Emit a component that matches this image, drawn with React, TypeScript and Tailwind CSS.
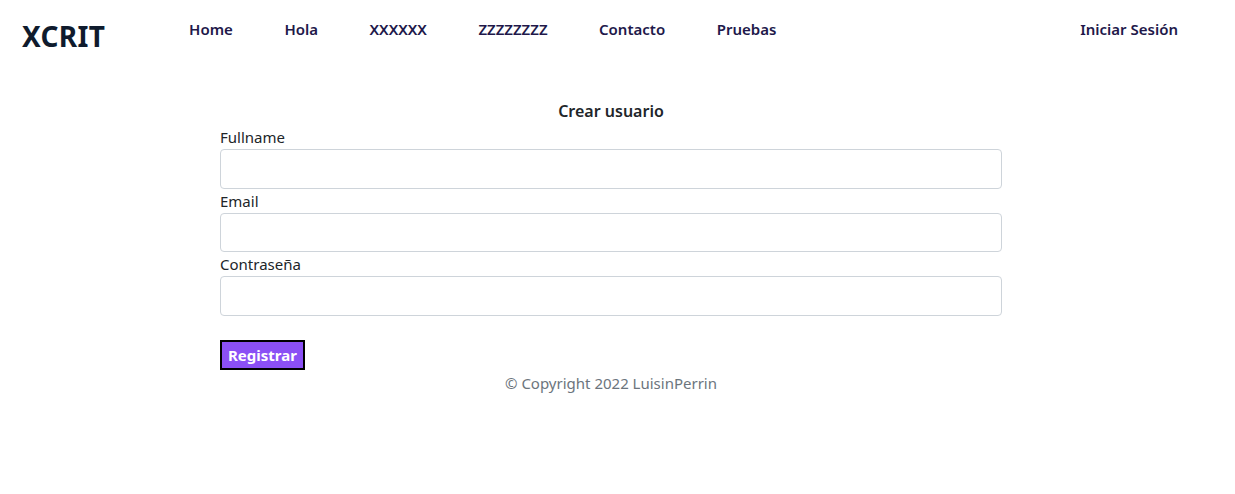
export default function App() {
  const links = ["Home", "Hola", "XXXXXX", "ZZZZZZZZ", "Contacto", "Pruebas"];
  return (
    <div className="min-h-[494px] bg-white text-[#212529]" style={{ fontFamily: '"Noto Sans", "Open Sans", sans-serif' }}>
      <nav className="flex h-[60px] items-center pl-[22px] pr-[57px]">
        <div className="text-[28px] font-bold leading-none tracking-[0.3px] text-[#0f1b2d] mt-[11px]">XCRIT</div>
        <ul className="ml-[84px] -mt-[2px] flex gap-[51.5px] text-[15px] font-semibold text-[#21184a]">
          {links.map((l) => (
            <li key={l}>{l}</li>
          ))}
        </ul>
        <div className="ml-auto -mt-[2px] text-[15px] font-semibold text-[#21184a]">Iniciar Sesión</div>
      </nav>
      <div className="ml-[220px] w-[782px] pt-[39px]">
        <h2 className="text-center text-[16px] font-semibold leading-[24px]">Crear usuario</h2>
        <div className="mt-[2px]">
          {["Fullname", "Email", "Contraseña"].map((f) => (
            <div key={f}>
              <label className="block text-[15px] leading-[24px]">{f}</label>
              <input className="block h-[39.5px] w-full rounded-[4px] border border-[#ced4da] bg-white px-3" />
            </div>
          ))}
        </div>
        <button className="mt-[24px] block border-2 border-black bg-[#8b50f5] px-[6px] text-[15px] font-bold leading-[26px] text-white">
          Registrar
        </button>
        <p className="mt-[1px] text-center text-[15px] leading-[24px] text-[#6c757d]">© Copyright 2022 LuisinPerrin</p>
      </div>
    </div>
  );
}
